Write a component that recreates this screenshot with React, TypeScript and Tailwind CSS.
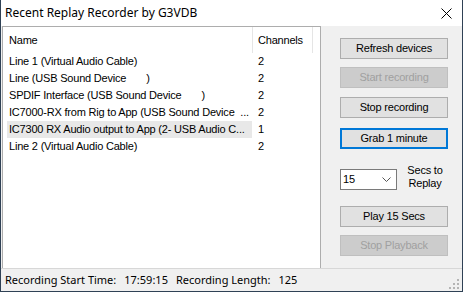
const devices = [
  { name: "Line 1 (Virtual Audio Cable)", ch: "2" },
  { name: "Line (USB Sound Device       )", ch: "2" },
  { name: "SPDIF Interface (USB Sound Device       )", ch: "2" },
  { name: "IC7000-RX from Rig to App (USB Sound Device  ...", ch: "2" },
  { name: "IC7300 RX Audio output to App (2- USB Audio C...", ch: "1", selected: true },
  { name: "Line 2 (Virtual Audio Cable)", ch: "2" },
];

function Button({
  label,
  disabled,
  focused,
  className = "",
}: {
  label: string;
  disabled?: boolean;
  focused?: boolean;
  className?: string;
}) {
  let look = "bg-[#e1e1e1] border border-[#adadad] text-black";
  if (disabled) look = "bg-[#cccccc] border border-[#bfbfbf] text-[#a0a0a0]";
  if (focused) look = "bg-[#e1e1e1] border-2 border-[#0078d7] text-black";
  return (
    <div className={`w-[108px] h-[21px] flex items-center justify-center ${look} ${className}`}>
      {label}
    </div>
  );
}

export default function App() {
  return (
    <div className="w-[463px] h-[292px] flex flex-col bg-[#f0f0f0] border-x border-b border-[#2f4155] font-['Liberation_Sans',Arial,sans-serif] text-[11px] tracking-[-0.2px] text-black overflow-hidden">
      {/* Title bar */}
      <div className="h-[26px] shrink-0 bg-white flex items-center justify-between pl-[4px] pr-[10px]">
        <span className="font-['Noto_Sans',sans-serif] text-[12px] tracking-normal">
          Recent Replay Recorder by G3VDB
        </span>
        <svg width="11" height="11" viewBox="0 0 11 11" className="mt-[1px]">
          <path d="M0.5 0.5 L10.5 10.5 M10.5 0.5 L0.5 10.5" stroke="#000" strokeWidth="1" />
        </svg>
      </div>

      <div className="flex-1 flex min-h-0">
        {/* Device list */}
        <div className="ml-[1px] w-[319px] bg-white border-x border-t border-[#adadad] flex flex-col">
          <div className="h-[26px] shrink-0 flex">
            <div className="w-[250px] border-r border-[#e5e5e5] flex items-center pl-[6px]">Name</div>
            <div className="w-[60px] border-r border-[#e5e5e5] flex items-center pl-[5px]">Channels</div>
          </div>
          {devices.map((d) => (
            <div key={d.name} className="h-[17px] flex pl-[4px]">
              <div
                className={`w-[245px] flex items-center pl-[2px] whitespace-pre overflow-hidden ${
                  d.selected ? "bg-[#e8e8e8]" : ""
                }`}
              >
                {d.name}
              </div>
              <div className="flex items-center pl-[6px]">{d.ch}</div>
            </div>
          ))}
        </div>

        {/* Controls */}
        <div className="flex flex-col pl-[19px] pt-[12px]">
          <Button label="Refresh devices" />
          <Button label="Start recording" disabled className="mt-[8px]" />
          <Button label="Stop recording" className="mt-[9px]" />
          <Button label="Grab 1 minute" focused className="mt-[10px]" />
          <div className="mt-[19px] flex items-center">
            <div className="w-[57px] h-[21px] bg-white border border-[#7a7a7a] flex items-center justify-between pl-[2px] pr-[5px]">
              <span>15</span>
              <svg width="9" height="5" viewBox="0 0 9 5">
                <path d="M0.5 0.5 L4.5 4.5 L8.5 0.5" stroke="#555" strokeWidth="1" fill="none" />
              </svg>
            </div>
            <div className="ml-[8px] w-[40px] text-center leading-[13px] -mt-[4px]">
              Secs to
              <br />
              Replay
            </div>
          </div>
          <Button label="Play 15 Secs" className="mt-[16px]" />
          <Button label="Stop Playback" disabled className="mt-[8px]" />
        </div>
      </div>

      {/* Status bar */}
      <div className="h-[23px] shrink-0 border-t border-[#d7d7d7] flex items-center pl-[4px] pr-[2px] font-['Noto_Sans',sans-serif] text-[11px] tracking-normal">
        <span>Recording Start Time:</span>
        <span className="ml-[8px]">17:59:15</span>
        <span className="ml-[8px]">Recording Length:</span>
        <span className="ml-[8px]">125</span>
        <svg width="11" height="11" viewBox="0 0 11 11" className="ml-auto mt-[8px]">
          <rect x="8" y="0" width="2" height="2" fill="#b4b4b4" />
          <rect x="4" y="4" width="2" height="2" fill="#b4b4b4" />
          <rect x="8" y="4" width="2" height="2" fill="#b4b4b4" />
          <rect x="0" y="8" width="2" height="2" fill="#b4b4b4" />
          <rect x="4" y="8" width="2" height="2" fill="#b4b4b4" />
          <rect x="8" y="8" width="2" height="2" fill="#b4b4b4" />
        </svg>
      </div>
    </div>
  );
}
